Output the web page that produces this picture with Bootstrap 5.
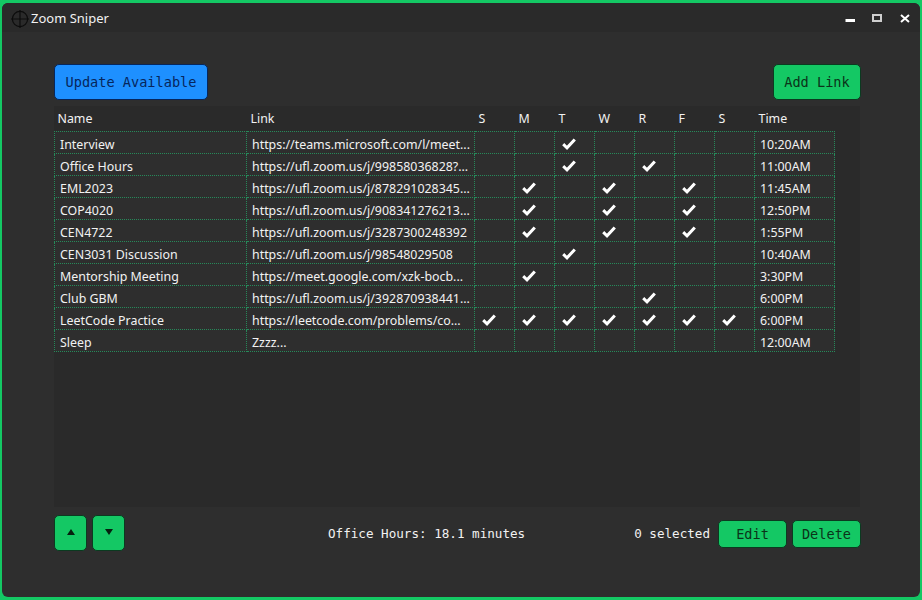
<!DOCTYPE html>
<html lang="en">
<head>
    <meta charset="UTF-8">
    <meta name="viewport" content="width=device-width, initial-scale=1">
    <title>Zoom Sniper</title>
    <link rel="stylesheet" href="https://cdn.jsdelivr.net/npm/bootstrap@5.3.0/dist/css/bootstrap.min.css">
    <style>
        html, body { height: 600px; overflow: hidden; }
        body { background: #14c864; padding: 3px 2px; font-family: "Noto Sans", sans-serif; font-size: 12.4px; color: #f2f2f2; }
        .app-window { height: 594px; background: #2e2e2e; border-radius: 6px; overflow: hidden; }
        .title-bar { height: 29px; background: #2a2a2a; padding: 2px 1px 0 9px; }
        .title-text { font-size: 13px; margin-left: 2px; }
        .win-ctl { width: 28px; height: 27px; padding-top: 1px; }
        .app-body { height: 565px; padding: 32px 59px 0 52px; }
        .mono { font-family: "DejaVu Sans Mono", monospace; }
        .app-btn { font-family: "DejaVu Sans Mono", monospace; font-size: 13.6px; padding: 0; border-radius: 5px; border: 1px solid #0b3a20; background: #14c864; color: #0b3319; }
        .app-btn:hover { background: #14c864; color: #0b3319; border-color: #0b3a20; }
        .top-btn { height: 36px; }
        .btn-update, .btn-update:hover { width: 154px; background: #1e90ff; color: #06265c; border-color: #06265c; }
        .btn-add { width: 88px; }
        .grid-panel { height: 401px; margin: 6px 1px 0 0; background: #2a2a2a; }
        .link-table { table-layout: fixed; width: 780px; border-collapse: collapse; color: #f2f2f2; }
        .link-table th { height: 25px; padding: 2px 0 0 4px; font-weight: 400; border: 0; vertical-align: middle; }
        .link-table th:first-child { padding-left: 3px; }
        .link-table td { height: 22px; padding: 4px 5px 0; background: #2e2e2e; border: 1px dotted #268a5a; vertical-align: middle; white-space: nowrap; line-height: 17px; }
        .link-table td.day { padding: 4px 0 0 7px; }
        .day svg { display: block; }
        .bottom-row { margin-top: 8px; }
        .arrow-btn { width: 33px; height: 36px; }
        .arrow-btn svg { margin-bottom: 2px; }
        .small-btn { width: 69px; height: 28px; margin-top: 2px; }
        .status-text { font-size: 12.6px; color: #f2f2f2; white-space: nowrap; margin-top: 2px; }
        .status-main { margin-left: 203px; }
        .selected-text { margin-right: 8px; }
        .gap-five { margin-right: 5px; }
    </style>
</head>
<body>
    <div class="app-window d-flex flex-column">
        <div class="title-bar d-flex align-items-center">
            <svg width="18" height="18" viewBox="0 0 18 18" fill="none" stroke="#0c0c0c" stroke-width="1.2">
                <circle cx="9" cy="9" r="7.6"/>
                <path d="M9 0v18M0 9h18"/>
            </svg>
            <span class="title-text">Zoom Sniper</span>
            <div class="d-flex ms-auto">
                <div class="win-ctl d-flex align-items-center justify-content-center">
                    <svg width="11" height="11" viewBox="0 0 11 11"><rect x="1.5" y="5" width="10" height="3" fill="#fff"/></svg>
                </div>
                <div class="win-ctl d-flex align-items-center justify-content-center">
                    <svg width="11" height="11" viewBox="0 0 11 11" fill="none"><rect x="1" y="1" width="8" height="6" stroke="#cfcfcf" stroke-width="2"/></svg>
                </div>
                <div class="win-ctl d-flex align-items-center justify-content-center">
                    <svg width="11" height="11" viewBox="0 0 11 11" fill="none"><path d="M1 1l8 7M9 1l-8 7" stroke="#fff" stroke-width="2"/></svg>
                </div>
            </div>
        </div>

        <div class="app-body">
            <div class="d-flex justify-content-between">
                <button type="button" class="btn app-btn top-btn btn-update">Update Available</button>
                <button type="button" class="btn app-btn top-btn btn-add">Add Link</button>
            </div>

            <div class="grid-panel">
                <table class="link-table">
                    <colgroup>
                        <col style="width:192px"><col style="width:228px">
                        <col style="width:40px"><col style="width:40px"><col style="width:40px"><col style="width:40px"><col style="width:40px"><col style="width:40px"><col style="width:40px">
                        <col style="width:80px">
                    </colgroup>
                    <thead>
                        <tr><th>Name</th><th>Link</th><th>S</th><th>M</th><th>T</th><th>W</th><th>R</th><th>F</th><th>S</th><th>Time</th></tr>
                    </thead>
                    <tbody id="listaLinks"></tbody>
                </table>
            </div>

            <div class="bottom-row d-flex align-items-center">
                <button type="button" class="btn app-btn arrow-btn d-flex align-items-center justify-content-center gap-five" aria-label="Up">
                    <svg width="8" height="6" viewBox="0 0 8 6"><path d="M4 0L8 6H0z" fill="#06200f"/></svg>
                </button>
                <button type="button" class="btn app-btn arrow-btn d-flex align-items-center justify-content-center" aria-label="Down">
                    <svg width="8" height="6" viewBox="0 0 8 6"><path d="M0 0h8L4 6z" fill="#06200f"/></svg>
                </button>
                <span class="mono status-text status-main">Office Hours: 18.1 minutes</span>
                <span class="mono status-text selected-text ms-auto">0 selected</span>
                <button type="button" class="btn app-btn small-btn gap-five">Edit</button>
                <button type="button" class="btn app-btn small-btn">Delete</button>
            </div>
        </div>
    </div>

    <script src="https://cdn.jsdelivr.net/npm/bootstrap@5.3.0/dist/js/bootstrap.bundle.min.js"></script>
    <script>
        const links = [
            ['Interview', 'https://teams.microsoft.com/l/meet...', 'T', '10:20AM'],
            ['Office Hours', 'https://ufl.zoom.us/j/99858036828?...', 'TR', '11:00AM'],
            ['EML2023', 'https://ufl.zoom.us/j/878291028345...', 'MWF', '11:45AM'],
            ['COP4020', 'https://ufl.zoom.us/j/908341276213...', 'MWF', '12:50PM'],
            ['CEN4722', 'https://ufl.zoom.us/j/3287300248392', 'MWF', '1:55PM'],
            ['CEN3031 Discussion', 'https://ufl.zoom.us/j/98548029508', 'T', '10:40AM'],
            ['Mentorship Meeting', 'https://meet.google.com/xzk-bocb...', 'M', '3:30PM'],
            ['Club GBM', 'https://ufl.zoom.us/j/392870938441...', 'R', '6:00PM'],
            ['LeetCode Practice', 'https://leetcode.com/problems/co...', 'UMTWRFA', '6:00PM'],
            ['Sleep', 'Zzzz...', '', '12:00AM']
        ];
        const check = '<svg width="14" height="12" viewBox="0 0 14 12"><path d="M1.2 6.2L5 9.8L12.8 1.4" fill="none" stroke="#fff" stroke-width="3"/></svg>';
        let html = '';
        links.forEach(l => {
            html += `<tr><td>${l[0]}</td><td>${l[1]}</td>`;
            'UMTWRFA'.split('').forEach(d => {
                html += `<td class="day">${l[2].includes(d) ? check : ''}</td>`;
            });
            html += `<td>${l[3]}</td></tr>`;
        });
        document.getElementById('listaLinks').innerHTML = html;
    </script>
</body>
</html>
